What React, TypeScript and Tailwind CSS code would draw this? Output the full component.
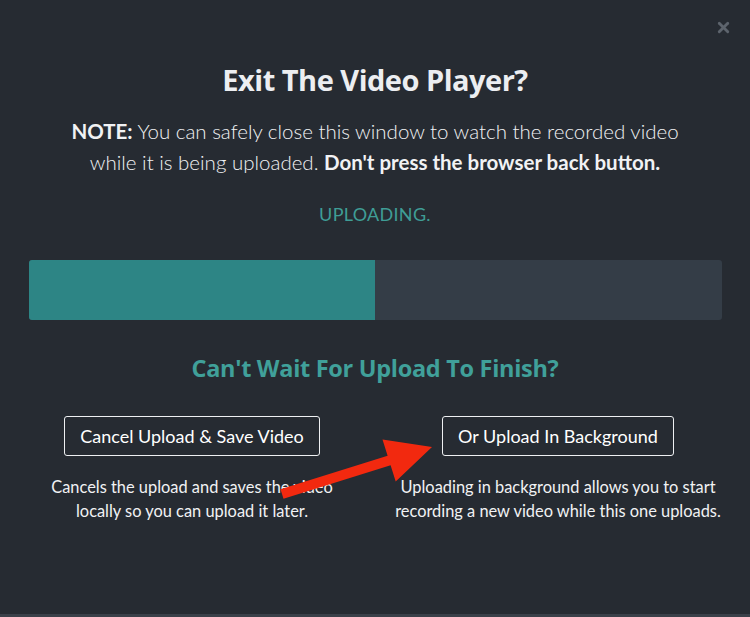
import { X } from 'lucide-react'

// Progress of the upload, in percent of the bar
const progress = 50

export default function App() {
  return (
    <div className="relative w-[750px] h-[617px] overflow-hidden bg-[#262b32] border-b-[3px] border-[#3a4049] text-[#f1f2f4] font-['Lato','Open_Sans',sans-serif]">
      <button className="absolute right-[18px] top-[19px] text-[#5d646d]">
        <X size={17} strokeWidth={4} />
      </button>

      <div className="flex flex-col items-center pt-[59px]">
        <h1 className="font-['Open_Sans',sans-serif] font-bold text-[29px] leading-[42px] tracking-[-0.5px] text-[#eceef1]">
          Exit The Video Player?
        </h1>

        <p className="mt-[15px] text-center text-[20.5px] leading-[31px] font-light">
          <span className="font-bold">NOTE:</span> You can safely close this window to watch the recorded video
          <br />
          while it is being uploaded. <span className="font-bold">Don't press the browser back button.</span>
        </p>

        <div className="mt-[23px] text-[18px] leading-[26px] text-[#3f9d96] tracking-[0.3px]">UPLOADING.</div>

        <div className="mt-[33px] w-[693px] h-[60px] rounded-[3px] bg-[#343d47] overflow-hidden flex">
          <div className="h-full bg-[#2d8585]" style={{ width: `${progress}%` }} />
        </div>

        <h2 className="mt-[31px] font-['Open_Sans',sans-serif] font-bold text-[23.5px] leading-[34px] tracking-[-0.3px] text-[#40a09a]">
          Can't Wait For Upload To Finish?
        </h2>

        <div className="mt-[31px] w-[732px] grid grid-cols-2">
          <div className="flex flex-col items-center">
            <button className="h-[40px] px-[15px] border-[1.5px] border-[#eef0f2] rounded-[3px] text-[18px] text-white">
              Cancel Upload &amp; Save Video
            </button>
            <p className="mt-[19px] text-center text-[16.4px] leading-[23.5px]">
              Cancels the upload and saves the video
              <br />
              locally so you can upload it later.
            </p>
          </div>
          <div className="flex flex-col items-center">
            <button className="h-[40px] px-[15px] border-[1.5px] border-[#eef0f2] rounded-[3px] text-[18px] text-white">
              Or Upload In Background
            </button>
            <p className="mt-[19px] text-center text-[16.4px] leading-[23.5px]">
              Uploading in background allows you to start
              <br />
              recording a new video while this one uploads.
            </p>
          </div>
        </div>
      </div>

      <svg className="absolute left-0 top-0 pointer-events-none" width="750" height="617" viewBox="0 0 750 617">
        <polygon
          points="280.5,489.2 387.6,455.7 382.5,439.5 432,447 395.7,481.5 390.6,465.3 283.5,498.8"
          fill="#f2290f"
        />
      </svg>
    </div>
  )
}
